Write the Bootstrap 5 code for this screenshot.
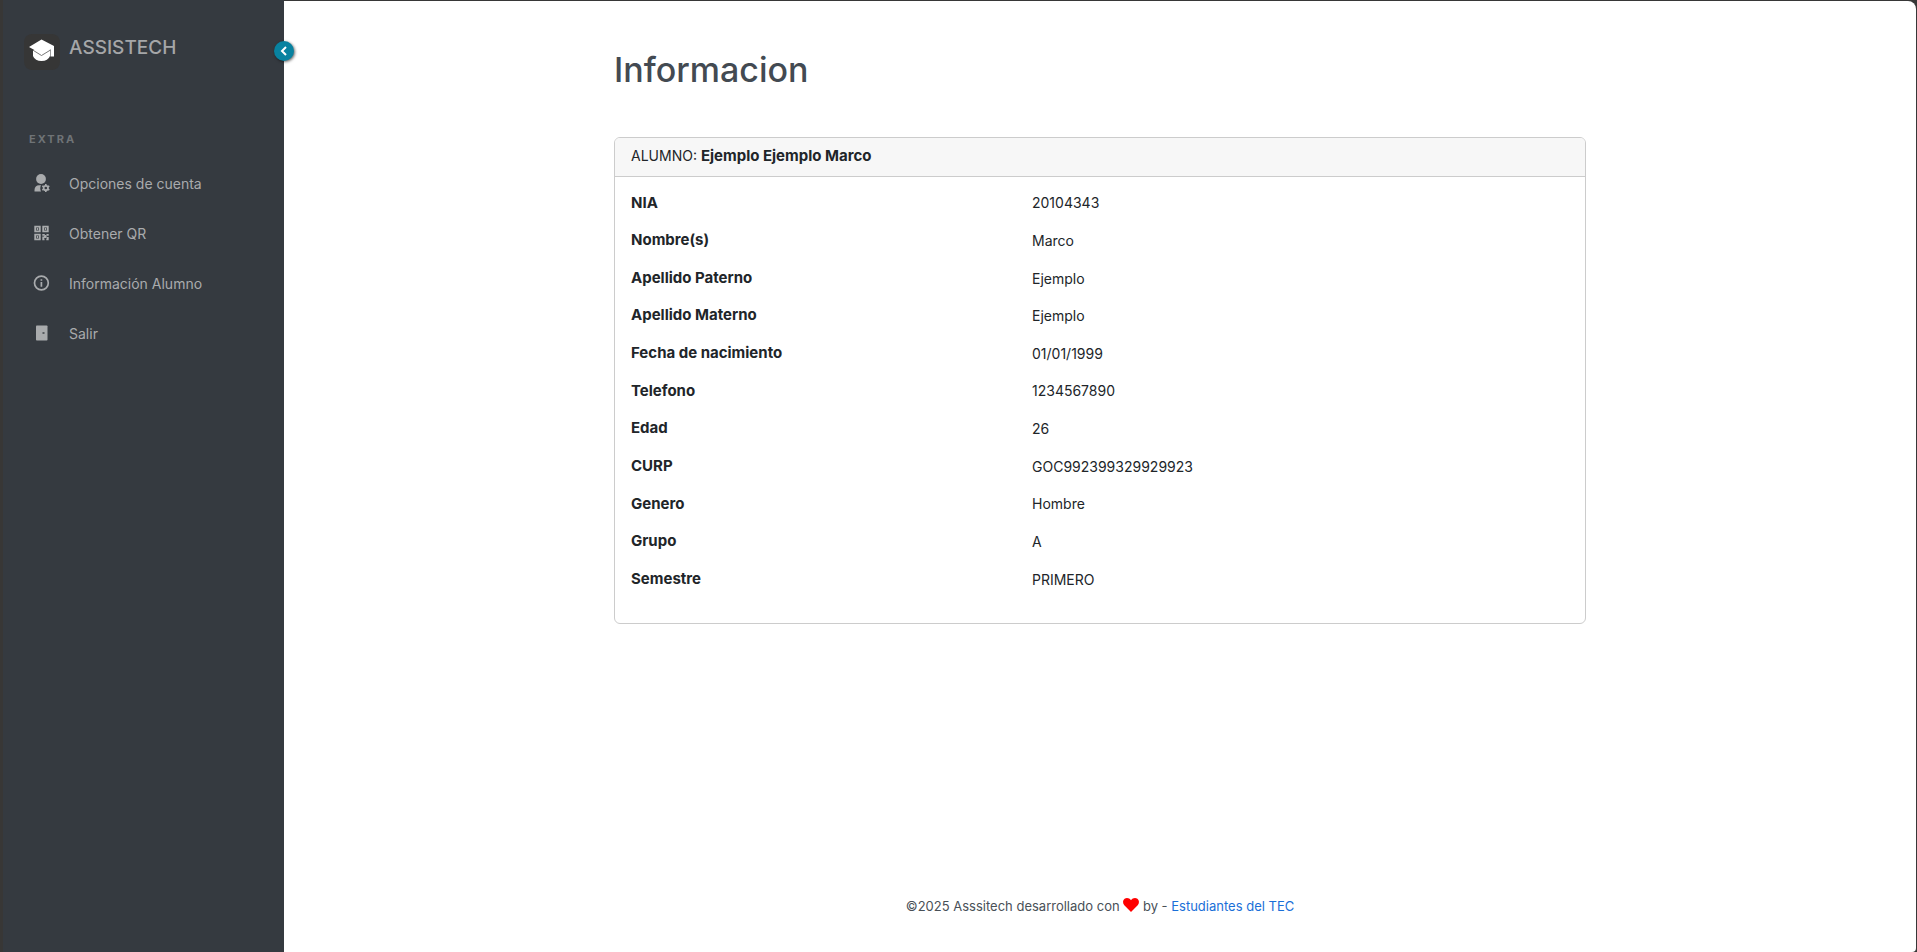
<!DOCTYPE html>
<html lang="es">
<head>
<meta charset="utf-8">
<meta name="viewport" content="width=device-width, initial-scale=1">
<title>Assistech - Informacion</title>
<link href="https://cdn.jsdelivr.net/npm/bootstrap@5.3.0/dist/css/bootstrap.min.css" rel="stylesheet">
<style>
  body { font-family: Inter, sans-serif; font-size: 14px; background: #373737; color: #212529; }
  .shell { min-height: 100vh; padding: 1px 1px 0 0; }
  .sidebar { width: 284px; margin-top: -1px; background: #353a40; border-left: 3px solid #383736; padding-top: 29px; }
  .brand { padding-left: 21px; gap: 9px; color: #a5a6a8; font-size: 19px; font-weight: 500; line-height: 38px; text-decoration: none; }
  .brand-mark { width: 36px; height: 36px; margin-top: 5px; border-radius: 8px; background: #363636; }
  .brand-mark svg { display: block; }
  .side-toggle { top: 41px; left: 100%; width: 20px; height: 20px; margin-left: -10px; background: #0882a0; color: #fff; box-shadow: 1px 1px 3px rgba(0,0,0,.6); }
  .side-heading { margin: 59px 0 9px 26px; font-size: 11px; line-height: 20px; font-weight: 700; letter-spacing: 2px; color: #6f7376; }
  .side-item { height: 50px; padding: 0 0 0 29px; gap: 19px; color: #a9abad; font-size: 14px; }
  .side-item:hover { color: #fff; }
  .content-pane { background: #fff; border-radius: 0 8px 4px 0; padding: 48px 24px 34px; }
  .content-inner { max-width: 972px; }
  .page-title { font-size: 34px; line-height: 42px; font-weight: 500; color: #434a52; margin-bottom: 46px; }
  .info-card { border-color: #ccc; }
  .info-card .card-header { padding: 7px 16px 9px; line-height: 22px; background: #f7f7f7; border-color: #ccc; }
  .info-card .card-body { padding: 7px 16px 25px; }
  .info-card strong, .info-card th { font-size: 15px; font-weight: 700; }
  .info-table { height: 414px; }
  .info-table th, .info-table td { padding: 0; vertical-align: middle; }
  .info-table th { width: 401px; }
  .site-footer { color: #495057; font-size: 13px; line-height: 24px; }
  .site-footer a { color: #1a6fd8; text-decoration: none; }
  .heart { vertical-align: -1px; }
</style>
</head>
<body>
<div class="shell d-flex">
  <aside class="sidebar position-relative flex-shrink-0">
    <a href="#" class="brand d-flex align-items-start">
      <span class="brand-mark flex-shrink-0">
        <svg width="36" height="36" viewBox="0 0 36 36" aria-hidden="true">
          <path d="M9 16V22Q11 27 17.500 27Q24 27 26 22V16Z" fill="#fff"/>
          <path d="M17.500 5.500 30 12V22.500H26.500V15.500L17.500 20 5 13Z" fill="#fff"/>
          <path d="M9 16.200 17.500 21.500 26.500 16" fill="none" stroke="#555" stroke-width=".8"/>
        </svg>
      </span>
      <span>ASSISTECH</span>
    </a>
    <button type="button" class="side-toggle btn rounded-circle border-0 p-0 position-absolute d-flex align-items-center justify-content-center" aria-label="Contraer menú">
      <svg width="10" height="10" viewBox="0 0 10 10" fill="none" stroke="currentColor" stroke-width="2" aria-hidden="true"><path d="M7 1 3 5l4 4"/></svg>
    </button>
    <h2 class="side-heading">EXTRA</h2>
    <nav class="nav flex-column">
      <a href="#" class="side-item nav-link d-flex align-items-center">
        <svg width="18" height="18" viewBox="0 0 18 18" fill="currentColor" aria-hidden="true">
          <circle cx="9" cy="5" r="4.900"/>
          <path d="M2.500 17.500V16c0-3 2-4.800 4.500-4.800h2c-1 2-1 4.500 0 6.300Z"/>
          <circle cx="13.800" cy="14" r="2.200" fill="none" stroke="currentColor" stroke-width="1.800"/>
          <path d="M13.800 10v1.800M13.800 16.200V18M10.300 12l1.600.9M15.700 15.100l1.600.9M10.300 16l1.600-.9M15.700 12.900l1.600-.9" stroke="currentColor" stroke-width="1.600"/>
        </svg>
        <span>Opciones de cuenta</span>
      </a>
      <a href="#" class="side-item nav-link d-flex align-items-center">
        <svg width="18" height="18" viewBox="0 0 18 18" fill="none" stroke="currentColor" stroke-width="1.800" aria-hidden="true">
          <path d="M3.200 2.700h4.600v4.600H3.200zM11.200 2.700h4.600v4.600h-4.600zM3.200 10.700h4.600v4.600H3.200z"/>
          <path d="M4.800 5h1.400M12.800 5h1.400M4.800 13h1.400"/>
          <path d="M10.300 10.800h2.500M14.500 10.800h2.200M12 13h2.600M10.300 15.300h2.200M14.300 15.300h2.400M11.200 12.500v3M15.800 13v2M13.400 11v2"/>
        </svg>
        <span>Obtener QR</span>
      </a>
      <a href="#" class="side-item nav-link d-flex align-items-center">
        <svg width="18" height="18" viewBox="0 0 18 18" fill="none" stroke="currentColor" stroke-width="1.700" aria-hidden="true">
          <circle cx="9.400" cy="9" r="6.900"/>
          <path d="M9.400 8v4.800M9.400 5.200v1.600"/>
        </svg>
        <span>Información Alumno</span>
      </a>
      <a href="#" class="side-item nav-link d-flex align-items-center">
        <svg width="18" height="18" viewBox="0 0 18 18" aria-hidden="true">
          <rect x="4" y="1.500" width="11.500" height="15" rx=".8" fill="currentColor"/>
          <path d="M10.500 9h2" stroke="#353a40" stroke-width="1.400"/>
        </svg>
        <span>Salir</span>
      </a>
    </nav>
  </aside>

  <div class="content-pane flex-grow-1 d-flex flex-column">
    <main class="content-inner w-100 mx-auto">
      <h1 class="page-title">Informacion</h1>
      <section class="info-card card">
        <div class="card-header">ALUMNO: <strong>Ejemplo Ejemplo Marco</strong></div>
        <div class="card-body">
          <table class="info-table w-100">
            <tbody>
              <tr><th scope="row">NIA</th><td>20104343</td></tr>
              <tr><th scope="row">Nombre(s)</th><td>Marco</td></tr>
              <tr><th scope="row">Apellido Paterno</th><td>Ejemplo</td></tr>
              <tr><th scope="row">Apellido Materno</th><td>Ejemplo</td></tr>
              <tr><th scope="row">Fecha de nacimiento</th><td>01/01/1999</td></tr>
              <tr><th scope="row">Telefono</th><td>1234567890</td></tr>
              <tr><th scope="row">Edad</th><td>26</td></tr>
              <tr><th scope="row">CURP</th><td>GOC992399329929923</td></tr>
              <tr><th scope="row">Genero</th><td>Hombre</td></tr>
              <tr><th scope="row">Grupo</th><td>A</td></tr>
              <tr><th scope="row">Semestre</th><td>PRIMERO</td></tr>
            </tbody>
          </table>
        </div>
      </section>
    </main>
    <footer class="site-footer mt-auto text-center">
      ©2025 Asssitech desarrollado con
      <svg class="heart" width="16" height="14" viewBox="0 0 16 14" role="img" aria-label="amor"><path d="M8 14 1.300 7.200C-.5 5.200-.3 2.200 1.600.8 3.600-.6 6.500 0 8 2.300 9.500 0 12.400-.6 14.400.8c1.900 1.400 2.100 4.400.3 6.400Z" fill="#fe0000"/></svg>
      by - <a href="#">Estudiantes del TEC</a>
    </footer>
  </div>
</div>
<script src="https://cdn.jsdelivr.net/npm/bootstrap@5.3.0/dist/js/bootstrap.bundle.min.js"></script>
</body>
</html>
